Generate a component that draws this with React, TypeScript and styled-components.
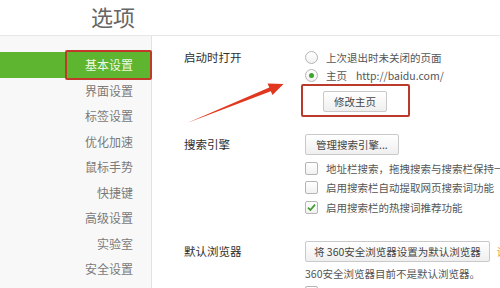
import React from 'react'
import styled, { createGlobalStyle } from 'styled-components'

const navItems = ['基本设置', '界面设置', '标签设置', '优化加速', '鼠标手势', '快捷键', '高级设置', '实验室', '安全设置']

const App: React.FC = () => {
  return (
    <>
      <GlobalStyle />
      <Page>
        <Header>选项</Header>
        <Body>
          <Sidebar>
            {navItems.map((item, i) => (
              <NavItem key={item} $active={i === 0}>
                {item}
                {i === 0 && <NavMarker />}
              </NavItem>
            ))}
          </Sidebar>
          <Main>
            <Section $gap={0}>
              <Label $h={18}>启动时打开</Label>
              <Controls>
                <OptionRow $h={18}>
                  <Radio />
                  上次退出时未关闭的页面
                </OptionRow>
                <OptionRow $h={18}>
                  <Radio $checked />
                  <span>主页</span>
                  <Url>http://baidu.com/</Url>
                </OptionRow>
                <HomeSlot>
                  <Button>修改主页</Button>
                </HomeSlot>
              </Controls>
            </Section>

            <Section $gap={17}>
              <Label $h={21}>搜索引擎</Label>
              <Controls>
                <Button>管理搜索引擎...</Button>
                <CheckList>
                  <OptionRow $h={19.5}>
                    <Checkbox />
                    地址栏搜索，拖拽搜索与搜索栏保持一致
                  </OptionRow>
                  <OptionRow $h={19.5}>
                    <Checkbox />
                    启用搜索栏自动提取网页搜索词功能
                  </OptionRow>
                  <OptionRow $h={19.5}>
                    <Checkbox>
                      <svg width="11" height="11" viewBox="0 0 11 11">
                        <path d="M2 5.6 L4.4 8 L9 2.6" fill="none" stroke="#3f9c2c" strokeWidth="1.7" />
                      </svg>
                    </Checkbox>
                    启用搜索栏的热搜词推荐功能
                  </OptionRow>
                </CheckList>
              </Controls>
            </Section>

            <Section $gap={24}>
              <Label $h={21}>默认浏览器</Label>
              <Controls>
                <ButtonRow>
                  <Button $pad={8}>将 360安全浏览器设置为默认浏览器</Button>
                  <Link>设为默认</Link>
                </ButtonRow>
                <Status>360安全浏览器目前不是默认浏览器。</Status>
                <OptionRow $h={18}>
                  <Checkbox />
                  启动时检查是否为默认浏览器
                </OptionRow>
              </Controls>
            </Section>
          </Main>
        </Body>
        <Arrow width="500" height="288" viewBox="0 0 500 288">
          <polygon
            points="187,123 269.3,87.5 267.6,83.6 283.5,84 272.5,95 270.8,91.2"
            fill="#e2371f"
          />
        </Arrow>
      </Page>
    </>
  )
}
export default App

const GlobalStyle = createGlobalStyle`
  html, body {
    margin: 0;
    padding: 0;
    background: #fff;
  }
  body {
    font-family: "Noto Sans CJK SC", "Noto Sans", sans-serif;
  }
`

const Page = styled.div`
  position: relative;
  width: 500px;
  height: 288px;
  overflow: hidden;
  display: flex;
  flex-direction: column;
  background: #fff;
`

const Header = styled.div`
  flex: none;
  height: 35px;
  line-height: 33px;
  padding-left: 91px;
  font-size: 22px;
  color: #666;
  border-bottom: 1px solid #e8e8e8;
`

const Body = styled.div`
  flex: 1;
  min-height: 0;
  display: flex;
`

const Sidebar = styled.nav`
  flex: none;
  width: 151px;
  padding-top: 16px;
  background: #f8f8f8;
  border-right: 1px solid #e2e2e2;
`

const NavItem = styled.div<{ $active?: boolean }>`
  position: relative;
  height: 25.5px;
  line-height: 25.5px;
  padding-right: 18px;
  text-align: right;
  font-size: 12px;
  color: ${(p) => (p.$active ? '#eef8e2' : '#7a7a7a')};
  background: ${(p) => (p.$active ? '#5db530' : 'transparent')};
`

const NavMarker = styled.span`
  position: absolute;
  top: -2px;
  bottom: -2px;
  left: 65px;
  right: -1px;
  border: 2px solid #bf3a2b;
  border-radius: 2px;
`

const Main = styled.main`
  flex: 1;
  padding: 12px 0 0 32px;
  display: flex;
  flex-direction: column;
`

const Section = styled.section<{ $gap: number }>`
  display: grid;
  grid-template-columns: 121px 1fr;
  margin-top: ${(p) => p.$gap}px;
`

const Label = styled.div<{ $h: number }>`
  height: ${(p) => p.$h}px;
  line-height: ${(p) => p.$h}px;
  font-size: 11.5px;
  color: #2e2e2e;
`

const Controls = styled.div`
  display: flex;
  flex-direction: column;
  align-items: flex-start;
`

const OptionRow = styled.div<{ $h: number }>`
  display: flex;
  align-items: center;
  gap: 8px;
  height: ${(p) => p.$h}px;
  font-size: 10.5px;
  color: #555;
  white-space: nowrap;
`

const Url = styled.span`
  margin-left: 1px;
  color: #555;
`

const Radio = styled.span<{ $checked?: boolean }>`
  position: relative;
  flex: none;
  width: 13px;
  height: 13px;
  box-sizing: border-box;
  border: 1px solid #b5b5b5;
  border-radius: 50%;
  background: linear-gradient(#fff, #f1f1f1);
  &::after {
    content: '';
    display: ${(p) => (p.$checked ? 'block' : 'none')};
    position: absolute;
    left: 3px;
    top: 3px;
    width: 5px;
    height: 5px;
    border-radius: 50%;
    background: #3fa52b;
  }
`

const Checkbox = styled.span`
  flex: none;
  width: 13px;
  height: 13px;
  box-sizing: border-box;
  border: 1px solid #b5b5b5;
  border-radius: 2px;
  background: linear-gradient(#fff, #f1f1f1);
  display: flex;
  align-items: center;
  justify-content: center;
`

const CheckList = styled.div`
  margin-top: 3.5px;
  display: flex;
  flex-direction: column;
`

const HomeSlot = styled.div`
  box-sizing: border-box;
  margin-left: -4px;
  width: 109px;
  height: 33px;
  padding: 1px 0 0 20px;
  border: 2px solid #bb3a2c;
  border-radius: 2px;
`

const Button = styled.button<{ $pad?: number }>`
  height: 21px;
  padding: 0 ${(p) => p.$pad ?? 10}px;
  font-family: inherit;
  font-size: 10.5px;
  color: #444;
  white-space: nowrap;
  border: 1px solid #c9c9c9;
  border-radius: 2px;
  background: linear-gradient(#fff, #efefef);
`

const ButtonRow = styled.div`
  display: flex;
  align-items: center;
  gap: 7px;
  white-space: nowrap;
`

const Link = styled.span`
  font-size: 10.5px;
  color: #e39a2e;
`

const Status = styled.div`
  margin-top: 3px;
  height: 18px;
  line-height: 18px;
  font-size: 10.5px;
  color: #555;
  white-space: nowrap;
`

const Arrow = styled.svg`
  position: absolute;
  top: 0;
  left: 0;
  pointer-events: none;
`
